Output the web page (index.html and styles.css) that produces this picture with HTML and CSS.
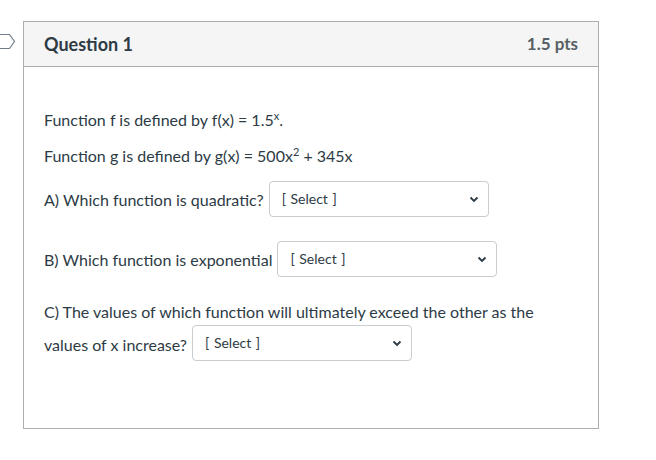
FILE: index.html
```html
<!DOCTYPE html>
<html lang="en">
<head>
<meta charset="utf-8">
<title>Question 1</title>
<link rel="stylesheet" href="styles.css">
</head>
<body>
<div class="page">
  <svg class="flag" width="16" height="18" viewBox="0 0 16 18" aria-hidden="true">
    <path d="M-2 1.5 H9.5 L14.5 8.5 L9.5 15.5 H-2" fill="none" stroke="#6f7e8a" stroke-width="1.2" stroke-linejoin="miter"/>
  </svg>
  <div class="question">
    <div class="header">
      <span class="title">Question 1</span>
      <span class="pts">1.5 pts</span>
    </div>
    <div class="content">
      <p class="line">Function f is defined by f(x) = 1.5<sup>x</sup>.</p>
      <p class="line second">Function g is defined by g(x) = 500x<sup>2</sup> + 345x</p>
      <div class="row row-a">
        <span class="label">A) Which function is quadratic?</span>
        <span class="select"><span class="value">[ Select ]</span>
          <svg class="chev" width="10" height="7" viewBox="0 0 10 7"><path d="M1.5 1.5 L5 5 L8.5 1.5" fill="none" stroke="#2d3b45" stroke-width="1.9"/></svg>
        </span>
      </div>
      <div class="row row-b">
        <span class="label">B) Which function is exponential</span>
        <span class="select"><span class="value">[ Select ]</span>
          <svg class="chev" width="10" height="7" viewBox="0 0 10 7"><path d="M1.5 1.5 L5 5 L8.5 1.5" fill="none" stroke="#2d3b45" stroke-width="1.9"/></svg>
        </span>
      </div>
      <div class="block-c">
        <p class="line">C) The values of which function will ultimately exceed the other as the</p>
        <div class="row row-c">
          <span class="label">values of x increase?</span>
          <span class="select"><span class="value">[ Select ]</span>
            <svg class="chev" width="10" height="7" viewBox="0 0 10 7"><path d="M1.5 1.5 L5 5 L8.5 1.5" fill="none" stroke="#2d3b45" stroke-width="1.9"/></svg>
          </span>
        </div>
      </div>
    </div>
  </div>
</div>
</body>
</html>
```
FILE: styles.css
```css
* { box-sizing: border-box; }
html, body {
  margin: 0;
  padding: 0;
  background: #ffffff;
}
body {
  font-family: Lato, "Noto Sans", sans-serif;
  color: #2d3b45;
  font-size: 16px;
}
.page {
  position: relative;
  padding: 21px 0 0 23px;
}
.flag {
  position: absolute;
  left: 0;
  top: 33px;
}
.question {
  width: 576px;
  height: 408px;
  border: 1px solid #aeaeae;
  display: flex;
  flex-direction: column;
}
.header {
  height: 45px;
  background: #f5f5f5;
  border-bottom: 1px solid #aeaeae;
  display: flex;
  align-items: center;
  justify-content: space-between;
  padding: 0 20px 1px 20px;
}
.title {
  font-weight: 700;
  font-size: 18px;
  color: #2d3b45;
}
.pts {
  font-weight: 700;
  font-size: 17px;
  color: #555f66;
}
.content {
  display: flex;
  flex-direction: column;
  padding: 41px 20px 0 20px;
}
.line {
  margin: 0;
  line-height: 24px;
  height: 24px;
  white-space: nowrap;
}
.line.second { margin-top: 12px; }
sup {
  font-size: 11px;
  line-height: 0;
  vertical-align: 6px;
}
.row {
  display: flex;
  align-items: baseline;
  gap: 5px;
  white-space: nowrap;
}
.label {
  position: relative;
  top: 1px;
}
.row-a { margin-top: 13px; }
.row-b { margin-top: 24px; }
.block-c { margin-top: 23px; }
.row-c { margin-top: 1px; }
.row-c .label { top: 2px; }
.select {
  width: 220px;
  height: 36px;
  border: 1px solid #c7cdd1;
  border-radius: 4px;
  background: #ffffff;
  display: inline-flex;
  align-items: center;
  justify-content: space-between;
  padding: 0 9px 0 12px;
  font-size: 14px;
  color: #2d3b45;
}
.value {
  position: relative;
  top: -1px;
  word-spacing: 1px;
}
.chev { display: block; }
```
